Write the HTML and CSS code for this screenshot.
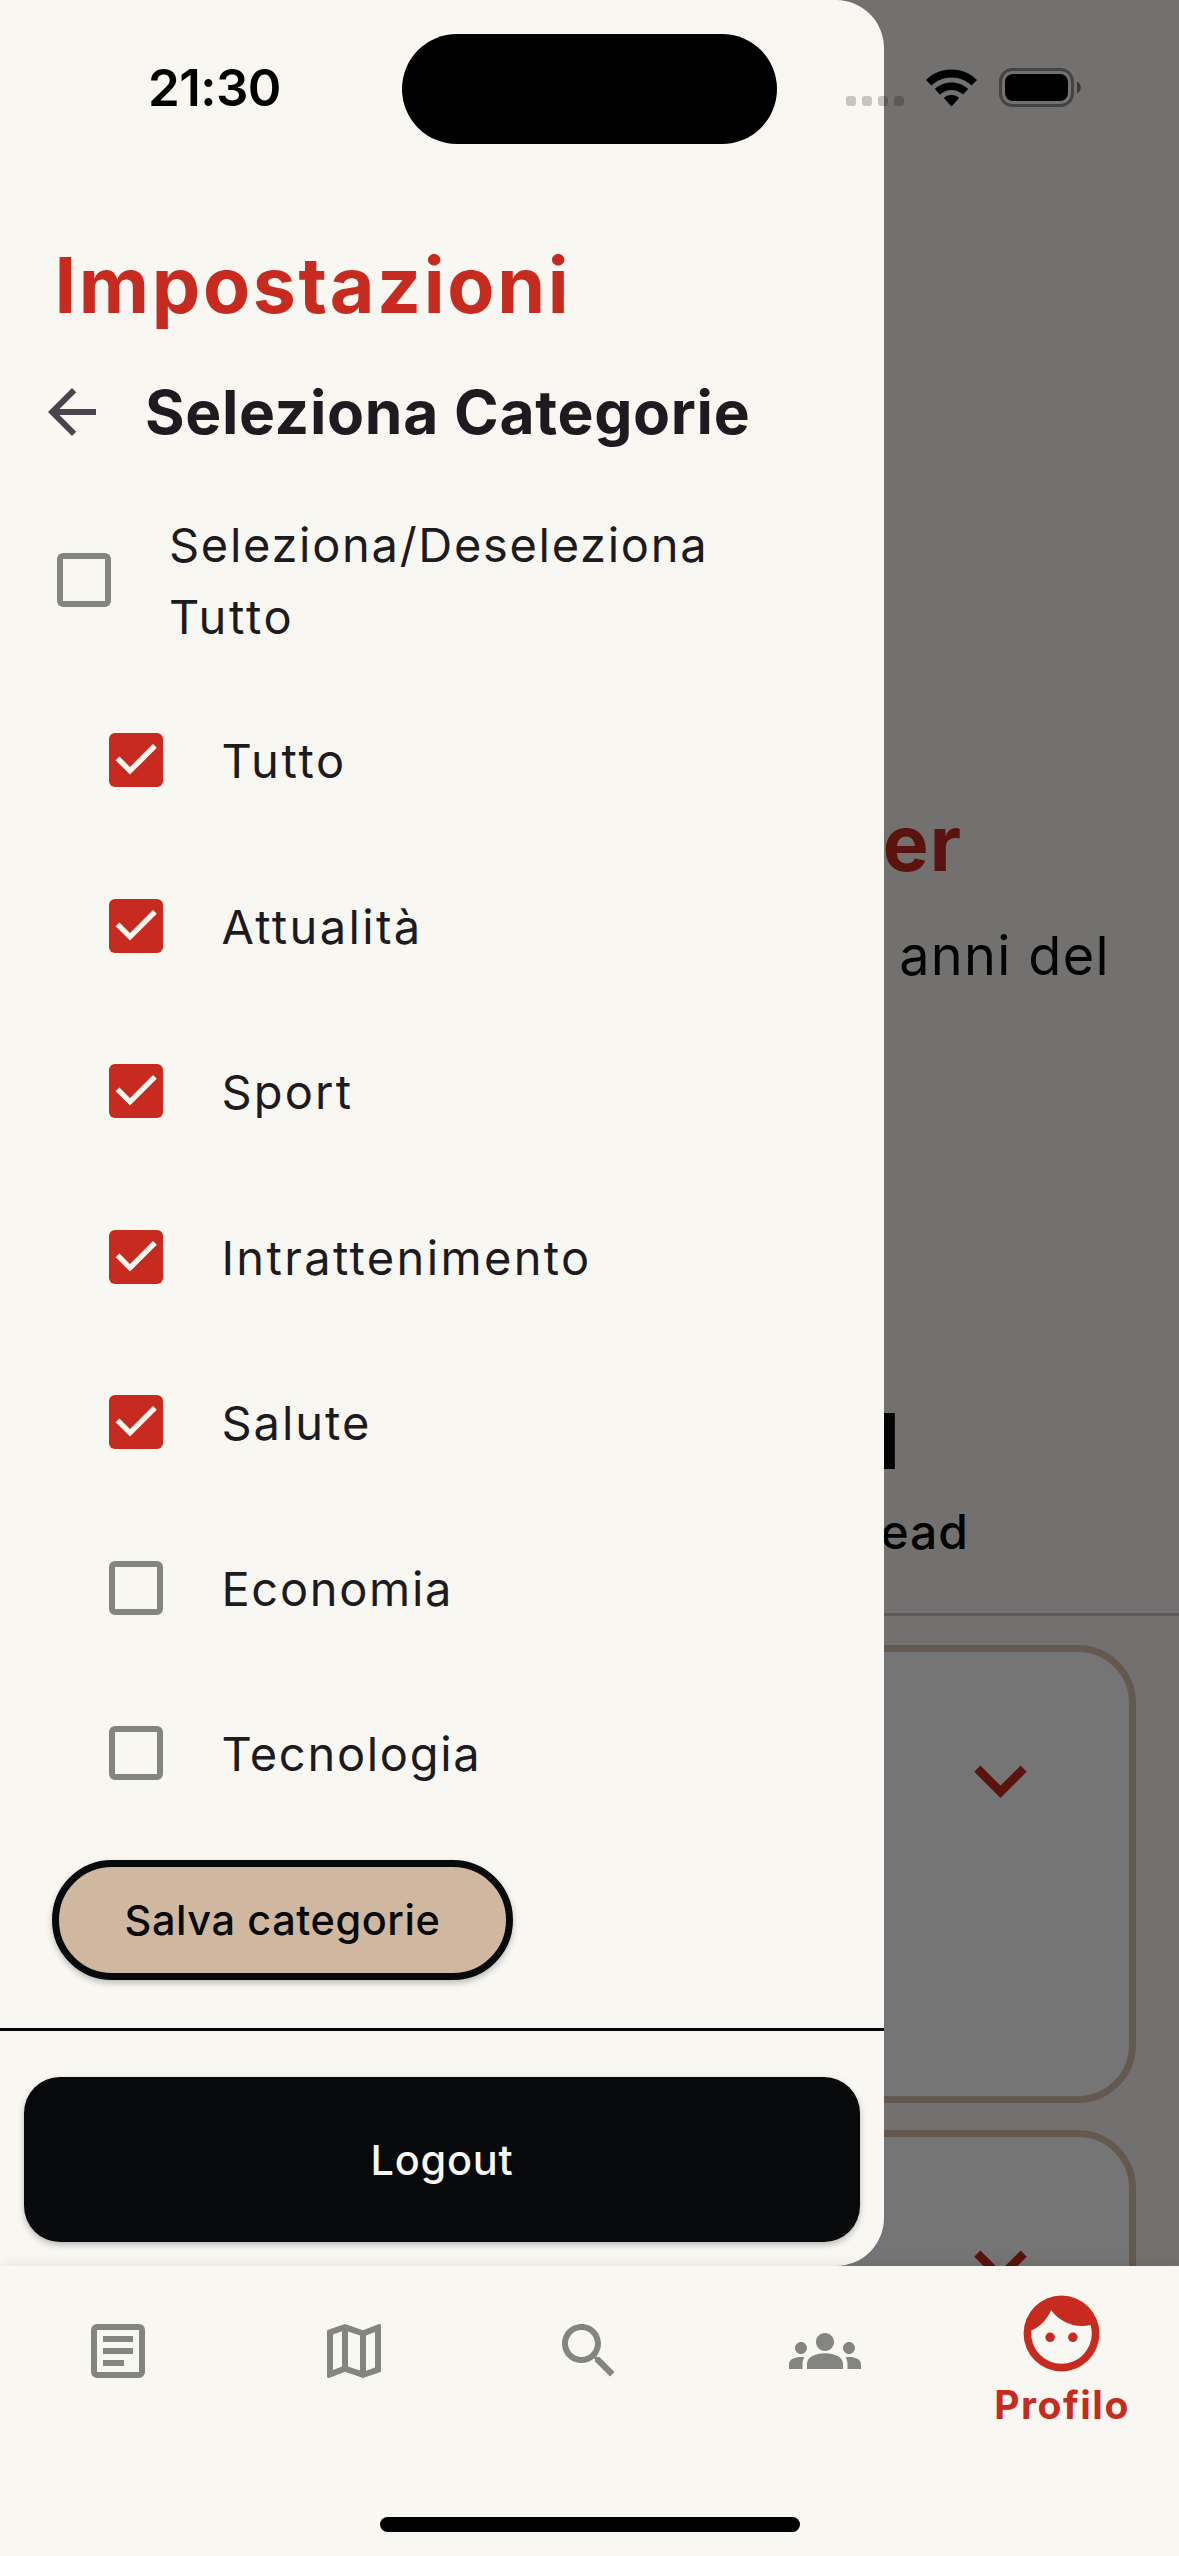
FILE: index.html
```html
<!DOCTYPE html>
<html lang="it">
<head>
<meta charset="utf-8">
<title>Impostazioni</title>
<link rel="stylesheet" href="styles.css">
</head>
<body>
<div class="phone">
  <main class="stage">
    <section class="profile">
      <h2 class="profile-name">er</h2>
      <p class="profile-bio">anni del</p>
      <div class="stat"><span class="stat-value">1</span><span class="stat-label">ead</span></div>
      <div class="cards">
        <div class="card"><svg class="chevron" viewBox="0 0 24 24"><path d="M16.59 8.59 12 13.17 7.41 8.59 6 10l6 6 6-6z"/></svg></div>
        <div class="card"><svg class="chevron" viewBox="0 0 24 24"><path d="M16.59 8.59 12 13.17 7.41 8.59 6 10l6 6 6-6z"/></svg></div>
      </div>
    </section>
    <div class="scrim"></div>
    <aside class="drawer">
      <h1 class="title">Impostazioni</h1>
      <div class="heading">
        <svg class="back" viewBox="0 0 24 24"><path d="M20 11H7.83l5.59-5.59L12 4l-8 8 8 8 1.41-1.41L7.83 13H20v-2z"/></svg>
        <h2 class="subtitle">Seleziona Categorie</h2>
      </div>
      <div class="option option-all"><span class="box"></span><span class="label label-all">Seleziona/Deseleziona<br><span class="l-tutto">Tutto</span></span></div>
      <div class="options">
        <div class="option"><span class="box on"><svg viewBox="0 0 18 18"><path d="M2.85 8.45 7 12.6 15.3 4.3"/></svg></span><span class="label l-tutto">Tutto</span></div>
        <div class="option"><span class="box on"><svg viewBox="0 0 18 18"><path d="M2.85 8.45 7 12.6 15.3 4.3"/></svg></span><span class="label l-attualita">Attualità</span></div>
        <div class="option"><span class="box on"><svg viewBox="0 0 18 18"><path d="M2.85 8.45 7 12.6 15.3 4.3"/></svg></span><span class="label l-sport">Sport</span></div>
        <div class="option"><span class="box on"><svg viewBox="0 0 18 18"><path d="M2.85 8.45 7 12.6 15.3 4.3"/></svg></span><span class="label l-intra">Intrattenimento</span></div>
        <div class="option"><span class="box on"><svg viewBox="0 0 18 18"><path d="M2.85 8.45 7 12.6 15.3 4.3"/></svg></span><span class="label l-salute">Salute</span></div>
        <div class="option"><span class="box"></span><span class="label l-economia">Economia</span></div>
        <div class="option"><span class="box"></span><span class="label l-tecno">Tecnologia</span></div>
      </div>
      <button class="save">Salva categorie</button>
      <div class="footer"><button class="logout">Logout</button></div>
    </aside>
  </main>
  <nav class="tabs">
    <div class="tab"><svg viewBox="0 0 24 24"><path fill-rule="evenodd" d="M5 3h14a2 2 0 0 1 2 2v14a2 2 0 0 1-2 2H5a2 2 0 0 1-2-2V5a2 2 0 0 1 2-2zM5 5v14h14V5z"/><path d="M14 17H7v-2h7v2zm3-4H7v-2h10v2zm0-4H7V7h10v2z"/></svg></div>
    <div class="tab"><svg viewBox="0 0 24 24"><path d="M20.500 3l-.16.030L15 5.100 9 3 3.360 4.900c-.21.070-.36.250-.36.480V20.500c0 .28.220.5.500.5l.16-.03L9 18.900l6 2.100 5.640-1.900c.21-.07.360-.25.360-.48V3.500c0-.28-.22-.5-.5-.5zM10 5.470l4 1.400v11.660l-4-1.400V5.470zm-5 .990l3-1.010v11.700l-3 1.160V6.460zm14 11.080l-3 1.010V6.860l3-1.160v11.840z"/></svg></div>
    <div class="tab"><svg viewBox="0 0 24 24"><path d="M15.5 14h-.79l-.28-.27C15.410 12.590 16 11.110 16 9.500 16 5.910 13.090 3 9.500 3S3 5.910 3 9.500 5.910 16 9.500 16c1.610 0 3.090-.59 4.230-1.570l.27.280v.79l5 4.990L20.490 19l-4.990-5zm-6 0C7.010 14 5 11.990 5 9.500S7.010 5 9.500 5 14 7.010 14 9.500 11.990 14 9.500 14z"/></svg></div>
    <div class="tab"><svg viewBox="0 0 24 24"><path d="M12 12.750c1.630 0 3.070.390 4.240.9 1.080.48 1.760 1.560 1.760 2.730V18H6v-1.610c0-1.180.680-2.260 1.760-2.730 1.170-.52 2.610-.91 4.240-.91zM4 13c1.100 0 2-.9 2-2s-.9-2-2-2-2 .9-2 2 .9 2 2 2zm1.130 1.100c-.37-.06-.74-.1-1.130-.1-.99 0-1.930.210-2.780.580C.480 14.900 0 15.620 0 16.430V18h4.500v-1.610c0-.83.230-1.610.630-2.290zM20 13c1.100 0 2-.9 2-2s-.9-2-2-2-2 .9-2 2 .9 2 2 2zm4 3.430c0-.81-.48-1.530-1.220-1.850-.85-.37-1.790-.58-2.780-.58-.39 0-.76.040-1.130.1.400.680.630 1.460.630 2.290V18H24v-1.570zM12 6c1.660 0 3 1.340 3 3s-1.340 3-3 3-3-1.340-3-3 1.340-3 3-3z"/></svg></div>
    <div class="tab active"><svg viewBox="0 0 24 24"><circle cx="9" cy="13" r="1.250"/><circle cx="15" cy="13" r="1.250"/><path fill-rule="evenodd" d="M12 2a10 10 0 1 0 0 20 10 10 0 0 0 0-20zm0 18a8 8 0 0 1-7.960-8.800C6.400 10.150 8.270 8.210 9.260 5.770A9.970 9.970 0 0 0 17.410 10c.78 0 1.530-.09 2.250-.26.220.72.340 1.470.34 2.260a8 8 0 0 1-8 8z"/></svg><span>Profilo</span></div>
  </nav>
  <div class="home-bar"></div>
  <div class="status">
    <span class="clock">21:30</span>
    <span class="island"></span>
    <span class="dots"><i></i><i></i><i></i><i></i></span>
    <svg class="wifi" viewBox="0 0 51 38"><path d="M25.500 0.500C35.500 .5 44.500 4.500 51 11L45.500 16.500C40.500 11.500 33.500 8.500 25.500 8.500S10.500 11.500 5.500 16.500L0 11C6.500 4.500 15.500 .5 25.500 .5zM25.500 13.500c6.400 0 12.300 2.500 16.700 6.500l-5.200 5.500c-3-2.900-7-4.600-11.500-4.600s-8.500 1.700-11.500 4.600L8.800 20c4.400-4 10.300-6.500 16.700-6.500zM25.500 26c3 0 5.700 1.100 7.700 3L25.500 37.500 17.800 29c2-1.900 4.700-3 7.700-3z"/></svg>
    <svg class="battery" viewBox="0 0 83 40"><rect x="1.500" y="1.500" width="72" height="36" rx="12" fill="none" stroke="#000" stroke-opacity=".4" stroke-width="3"/><rect x="6" y="6" width="63" height="27" rx="8"/><path d="M78 13.500c5 2 5 10 0 12z" fill-opacity=".5"/></svg>
  </div>
</div>
</body>
</html>
```
FILE: styles.css
```css
* { box-sizing: border-box; margin: 0; padding: 0; }
body {
  width: 1179px;
  height: 2556px;
  overflow: hidden;
  background: #f9f7f2;
  font-family: Inter, "Liberation Sans", sans-serif;
  color: #1d1b20;
}
svg { display: block; flex: none; }
button { font: inherit; border: 0; display: block; }
.phone { position: relative; width: 1179px; height: 2556px; display: flex; flex-direction: column; }
.stage { position: relative; height: 2266px; overflow: hidden; }

/* profile page under the drawer */
.profile { height: 2266px; padding-top: 793px; color: #050708; }
.profile-name { height: 100px; padding-right: 217px; text-align: right; font-size: 77px; line-height: 100px; font-weight: 700; letter-spacing: 1px; color: #c72a1e; }
.profile-bio { height: 80px; margin-top: 23px; padding-right: 69px; text-align: right; font-size: 54px; line-height: 80px; letter-spacing: 1.350px; }
.stat { height: 225px; margin-top: 395px; padding-right: 210px; display: flex; flex-direction: column; align-items: flex-end; border-bottom: 3px solid #cac4d0; }
.stat-value { margin-right: 69px; font-size: 77px; line-height: 100px; font-weight: 700; }
.stat-label { margin-top: 2px; font-size: 48px; line-height: 78px; font-weight: 500; letter-spacing: 1px; }
.cards { display: flex; flex-direction: column; gap: 27px; padding: 29px 43px; }
.card { height: 458px; flex: none; border: 7px solid #dbc3ad; border-radius: 58px; background: #fff; padding: 76px 76px; display: flex; justify-content: flex-end; }
.chevron { width: 105px; height: 105px; fill: #c72a1e; }
.scrim { position: absolute; inset: 0; background: rgba(0, 0, 0, .54); }

/* settings drawer */
.drawer { position: absolute; left: 0; top: 0; width: 884.25px; height: 2266px; padding-top: 235px; background: #f9f7f2; border-radius: 0 48px 48px 0; }
.title { height: 100px; padding-left: 54.500px; font-size: 77px; line-height: 100px; font-weight: 700; letter-spacing: 2.650px; color: #c72a1e; }
.heading { height: 154px; padding-left: 36px; display: flex; align-items: center; gap: 37px; }
.back { width: 72px; height: 72px; fill: #49454f; }
.subtitle { font-size: 60.500px; line-height: 80px; font-weight: 700; letter-spacing: .680px; white-space: nowrap; }
.option { height: 165.500px; padding-left: 109.400px; display: flex; align-items: center; gap: 58px; }
.option-all { height: 182px; margin-bottom: 1px; padding-left: 57px; }
.options { padding-top: 5.500px; }
.box { width: 54px; height: 54px; flex: none; border: 6px solid #848480; border-radius: 6px; }
.box.on { border: 0; background: #c72a1e; }
.box svg { width: 54px; height: 54px; fill: none; stroke: #f9f7f2; stroke-width: 1.800; }
.label { padding-top: 2px; font-size: 47px; line-height: 72px; letter-spacing: 2px; white-space: nowrap; }
.label-all { padding-top: 1px; letter-spacing: 1.700px; }
.l-tutto { letter-spacing: 2.700px; }
.l-attualita, .l-intra { letter-spacing: 2.350px; }
.l-sport { letter-spacing: 2.200px; }
.l-economia, .l-tecno { letter-spacing: 1.700px; }
.save { width: 461px; height: 120px; margin: 24px 0 0 52px; border: 7px solid #08090b; border-radius: 60px; background: #d0b8a0; color: #08090b; font-size: 41.500px; font-weight: 500; letter-spacing: .550px; box-shadow: 0 3px 6px rgba(0, 0, 0, .25); }
.footer { margin-top: 48px; border-top: 3px solid #020303; padding: 46px 24px 0; }
.logout { width: 836px; height: 165px; border-radius: 36px; background: #08090b; color: #f9f7f2; font-size: 41.500px; font-weight: 500; letter-spacing: .750px; box-shadow: 0 3px 6px rgba(0, 0, 0, .25); }

/* bottom navigation */
.tabs { position: relative; height: 290px; display: flex; background: #f9f7f2; box-shadow: 0 0 14px rgba(0, 0, 0, .1); padding-top: 22px; }
.tab { flex: 1; display: flex; flex-direction: column; align-items: center; padding-top: 27px; fill: #848480; }
.tab svg { width: 72px; height: 72px; }
.tab.active { padding-top: 0; fill: #c72a1e; color: #c72a1e; font-size: 39px; line-height: 54px; font-weight: 700; letter-spacing: 1.500px; }
.tab.active svg { width: 91px; height: 91px; margin-bottom: -1px; }
.tab.active span { padding-left: 2px; }
.home-bar { position: absolute; left: 380px; top: 2517px; width: 420px; height: 15px; border-radius: 8px; background: #000; }

/* status bar over everything */
.status { position: absolute; left: 0; top: 0; width: 1179px; height: 176px; display: flex; }
.clock { width: 402px; padding-left: 148px; padding-top: 57px; font-size: 51px; line-height: 62px; font-weight: 600; letter-spacing: -.550px; color: #000; }
.island { width: 375px; height: 110.500px; margin-top: 33.500px; border-radius: 55px; background: #000; }
.dots { display: flex; gap: 6px; margin: 96px 0 0 69px; height: 10px; }
.dots i { width: 10px; height: 10px; border-radius: 3px; background: rgba(0, 0, 0, .2); }
.wifi { width: 51px; height: 38px; margin: 68.500px 0 0 22px; }
.battery { width: 83px; height: 40px; margin: 68px 0 0 22px; }
```
